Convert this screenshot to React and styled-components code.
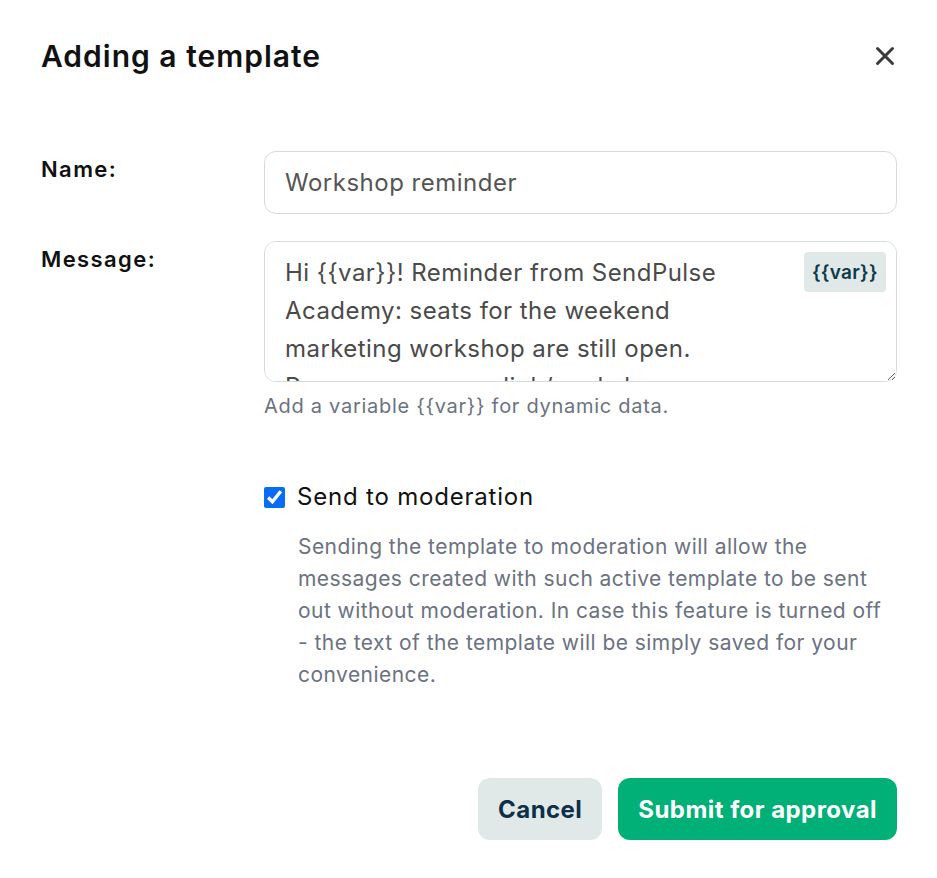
import React, { useState } from 'react';
import styled, { createGlobalStyle } from 'styled-components';

const GlobalStyle = createGlobalStyle`
    html, body {
        margin: 0;
        padding: 0;
        background: #fff;
    }
    body {
        font-family: Inter, "Noto Sans", sans-serif;
    }
`;

const App = () => {
    const [name, setName] = useState('Workshop reminder');
    const [message, setMessage] = useState('Hi {{var}}! Reminder from SendPulse Academy: seats for the weekend marketing workshop are still open. Reserve yours: sp.link/workshop');
    const [moderation, setModeration] = useState(true);

    return (
        <>
            <GlobalStyle />
            <Modal>
                <Header>
                    <Title>Adding a template</Title>
                    <CloseButton aria-label='Close'>
                        <svg width='20' height='20' viewBox='0 0 20 20'>
                            <path d='M2.5 2.5L17.5 17.5M17.5 2.5L2.5 17.5' stroke='#3a3a3a' strokeWidth='3' strokeLinecap='round' />
                        </svg>
                    </CloseButton>
                </Header>
                <Form>
                    <Label>Name:</Label>
                    <Field>
                        <Input value={name} onChange={e => setName(e.target.value)} />
                    </Field>
                    <Label>Message:</Label>
                    <Field>
                        <TextareaWrap>
                            <Textarea value={message} onChange={e => setMessage(e.target.value)} />
                            <VarButton type='button'>{'{{var}}'}</VarButton>
                        </TextareaWrap>
                        <Hint>{'Add a variable {{var}} for dynamic data.'}</Hint>
                    </Field>
                    <span />
                    <Field>
                        <CheckRow>
                            <Checkbox type='checkbox' checked={moderation} onChange={e => setModeration(e.target.checked)} />
                            Send to moderation
                        </CheckRow>
                        <Description>
                            Sending the template to moderation will allow the messages created with such active template to be sent out without moderation. In case this feature is turned off - the text of the template will be simply saved for your convenience.
                        </Description>
                    </Field>
                </Form>
                <Footer>
                    <Button>Cancel</Button>
                    <Button $primary>Submit for approval</Button>
                </Footer>
            </Modal>
        </>
    );
};

const Modal = styled.div`
    width: 937px;
    height: 878px;
    box-sizing: border-box;
    padding: 34px 40px 0 41px;
    display: flex;
    flex-direction: column;
    color: #111;
`;
const Header = styled.div`
    display: flex;
    align-items: center;
    justify-content: space-between;
`;
const Title = styled.h1`
    margin: 0;
    font-size: 30px;
    line-height: 44px;
    font-weight: 600;
    letter-spacing: 1px;
    color: #111;
`;
const CloseButton = styled.button`
    border: none;
    background: none;
    padding: 0;
    width: 24px;
    height: 24px;
    display: flex;
    align-items: center;
    justify-content: center;
    cursor: pointer;
`;
const Form = styled.div`
    margin-top: 73px;
    display: grid;
    grid-template-columns: 223px 1fr;
    row-gap: 27px;
`;
const Label = styled.div`
    font-size: 22px;
    font-weight: 600;
    line-height: 28px;
    letter-spacing: 1.4px;
    padding-top: 4px;
    color: #111;
`;
const Field = styled.div`
    display: flex;
    flex-direction: column;
`;
const Input = styled.input`
    height: 63px;
    box-sizing: border-box;
    border: 1px solid #d5dadc;
    border-radius: 12px;
    padding: 0 20px;
    font-family: inherit;
    font-size: 24px;
    letter-spacing: 0.5px;
    color: #555;
    outline: none;
`;
const TextareaWrap = styled.div`
    position: relative;
`;
const Textarea = styled.textarea`
    display: block;
    width: 100%;
    height: 141px;
    box-sizing: border-box;
    border: 1px solid #d5dadc;
    border-radius: 12px;
    padding: 12px 125px 0 20px;
    font-family: inherit;
    font-size: 24px;
    letter-spacing: 0.45px;
    line-height: 38px;
    color: #4a4a4a;
    outline: none;
    resize: vertical;
    overflow-y: scroll;
    &::-webkit-scrollbar {
        width: 7px;
    }
    &::-webkit-scrollbar-track {
        background: transparent;
    }
    &::-webkit-scrollbar-thumb {
        background: #d6d6d6;
        border-radius: 4px;
    }
`;
const VarButton = styled.button`
    position: absolute;
    top: 11px;
    right: 11px;
    height: 40px;
    padding: 0 8px;
    border: none;
    border-radius: 4px;
    background: #e0e8e8;
    color: #0d3a4a;
    font-family: inherit;
    font-size: 19px;
    font-weight: 600;
    letter-spacing: 0.3px;
    cursor: pointer;
`;
const Hint = styled.div`
    margin-top: 11px;
    font-size: 20px;
    line-height: 26px;
    letter-spacing: 0.72px;
    color: #6b7280;
`;
const CheckRow = styled.label`
    margin-top: 36px;
    display: flex;
    align-items: center;
    gap: 12px;
    font-size: 24px;
    line-height: 30px;
    letter-spacing: 0.8px;
    color: #111;
`;
const Checkbox = styled.input`
    margin: 0;
    width: 21px;
    height: 21px;
    accent-color: #0a6cf5;
`;
const Description = styled.p`
    margin: 19px 0 0 34px;
    font-size: 21px;
    line-height: 32px;
    letter-spacing: 0.45px;
    color: #6b7280;
`;
const Footer = styled.div`
    margin-top: auto;
    margin-bottom: 38px;
    display: flex;
    justify-content: flex-end;
    gap: 16px;
`;
const Button = styled.button`
    height: 62px;
    padding: 0 20px;
    border: none;
    border-radius: 12px;
    font-family: inherit;
    font-size: 24px;
    font-weight: 700;
    letter-spacing: 0.45px;
    background: ${({ $primary }) => ($primary ? '#00b077' : '#e1e8e8')};
    color: ${({ $primary }) => ($primary ? '#fff' : '#0d3048')};
    cursor: pointer;
`;

export default App;
